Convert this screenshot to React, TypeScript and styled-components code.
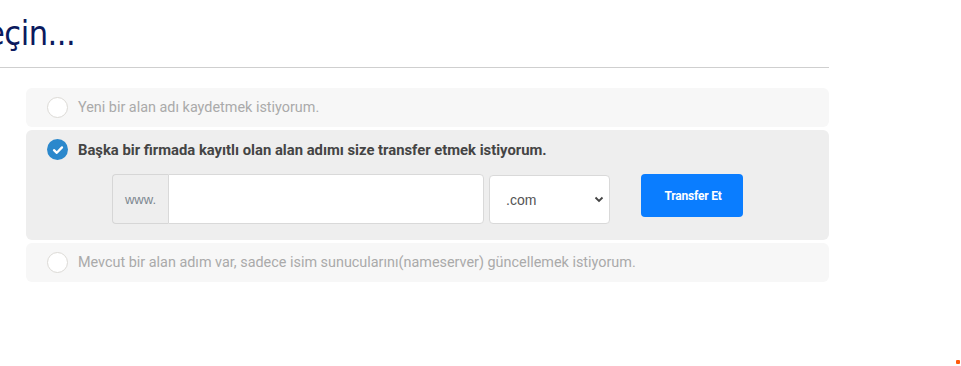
import React from "react";
import styled, { createGlobalStyle } from "styled-components";

const GlobalStyle = createGlobalStyle`
  html, body { margin: 0; padding: 0; background: #ffffff; }
  body { font-family: Roboto, "Noto Sans", sans-serif; overflow: hidden; }
  * { box-sizing: border-box; }
`;

const Page = styled.div`
  width: 829px;
  height: 366px;
  position: relative;
`;

const HeadingBar = styled.div`
  height: 68px;
  border-bottom: 1px solid #cfcfcf;
  overflow: hidden;
  width: 829px;
`;

const Heading = styled.h2`
  margin: 13px 0 0 -209px;
  font-family: "DejaVu Sans Condensed", "DejaVu Sans", sans-serif;
  font-weight: 400;
  font-size: 34px;
  color: #0b1a5e;
  white-space: nowrap;
  letter-spacing: -0.5px;
`;

const List = styled.div`
  display: flex;
  flex-direction: column;
  gap: 3px;
  margin: 20px 0 0 26px;
`;

const Option = styled.div<{ $active?: boolean }>`
  background: ${(p) => (p.$active ? "#eeeeee" : "#f7f7f7")};
  border-radius: 6px;
  padding: ${(p) => (p.$active ? "9px 21px 16px" : "9px 21px 9px")};
`;

const OptionHead = styled.label`
  display: flex;
  align-items: center;
  gap: 10px;
  height: 21px;
`;

const Radio = styled.span<{ $checked?: boolean }>`
  width: 21px;
  height: 21px;
  border-radius: 50%;
  flex: none;
  display: flex;
  align-items: center;
  justify-content: center;
  background: ${(p) => (p.$checked ? "#2b88cc" : "#ffffff")};
  border: ${(p) => (p.$checked ? "none" : "1px solid #dcdad6")};
`;

const Label = styled.span<{ $bold?: boolean }>`
  font-size: ${(p) => (p.$bold ? "14.8px" : "14.4px")};
  font-weight: ${(p) => (p.$bold ? 700 : 400)};
  color: ${(p) => (p.$bold ? "#444444" : "#aaaaaa")};
  white-space: nowrap;
`;

const FormRow = styled.div`
  display: flex;
  align-items: flex-start;
  margin: 14px 0 0 65px;
`;

const InputGroup = styled.div`
  display: flex;
  height: 50px;
`;

const Addon = styled.span`
  width: 56px;
  display: flex;
  align-items: center;
  justify-content: center;
  background: #eeeeee;
  border: 1px solid #d6d6d6;
  border-right: none;
  border-radius: 4px 0 0 4px;
  font-family: "Liberation Sans", Arial, sans-serif;
  font-size: 13px;
  color: #7d8790;
`;

const TextInput = styled.input`
  width: 316px;
  height: 50px;
  border: 1px solid #d9d9d9;
  border-radius: 0 4px 4px 0;
  background: #ffffff;
  outline: none;
  padding: 0 10px;
`;

const SelectBox = styled.div`
  width: 121px;
  height: 49px;
  margin: 1px 0 0 5px;
  border: 1px solid #d9d9d9;
  border-radius: 4px;
  background: #ffffff;
  display: flex;
  align-items: center;
  justify-content: space-between;
  padding: 0 5px 0 16px;
  font-family: "Liberation Sans", Arial, sans-serif;
  font-size: 14px;
  color: #555555;
`;

const Button = styled.button`
  margin-left: 31px;
  width: 102px;
  height: 43px;
  border: none;
  border-radius: 4px;
  background: #0a7dff;
  color: #ffffff;
  font-family: Roboto, sans-serif;
  font-weight: 700;
  font-size: 12px;
  letter-spacing: -0.2px;
  padding: 0 0 0 2px;
`;

const Dot = styled.span`
  position: absolute;
  left: 956px;
  top: 360px;
  width: 4px;
  height: 4px;
  border-radius: 1px;
  background: #ff5a0a;
`;

const Check = () => (
  <svg width="12" height="10" viewBox="0 0 12 10">
    <path d="M2 5.2 L4.8 7.8 L10 2.4" fill="none" stroke="#ffffff" strokeWidth="2.3" strokeLinecap="round" strokeLinejoin="round" />
  </svg>
);

const Chevron = () => (
  <svg width="10" height="7" viewBox="0 0 10 7">
    <path d="M1.5 1.5 L5 5 L8.5 1.5" fill="none" stroke="#444" strokeWidth="1.8" />
  </svg>
);

export default function App() {
  return (
    <>
      <GlobalStyle />
      <Page>
        <HeadingBar>
          <Heading>Alan adınızı seçin...</Heading>
        </HeadingBar>
        <List>
          <Option>
            <OptionHead>
              <Radio />
              <Label>Yeni bir alan adı kaydetmek istiyorum.</Label>
            </OptionHead>
          </Option>
          <Option $active>
            <OptionHead>
              <Radio $checked>
                <Check />
              </Radio>
              <Label $bold>Başka bir firmada kayıtlı olan alan adımı size transfer etmek istiyorum.</Label>
            </OptionHead>
            <FormRow>
              <InputGroup>
                <Addon>www.</Addon>
                <TextInput />
              </InputGroup>
              <SelectBox>
                <span>.com</span>
                <Chevron />
              </SelectBox>
              <Button>Transfer Et</Button>
            </FormRow>
          </Option>
          <Option>
            <OptionHead>
              <Radio />
              <Label>Mevcut bir alan adım var, sadece isim sunucularını(nameserver) güncellemek istiyorum.</Label>
            </OptionHead>
          </Option>
        </List>
        <Dot />
      </Page>
    </>
  );
}
